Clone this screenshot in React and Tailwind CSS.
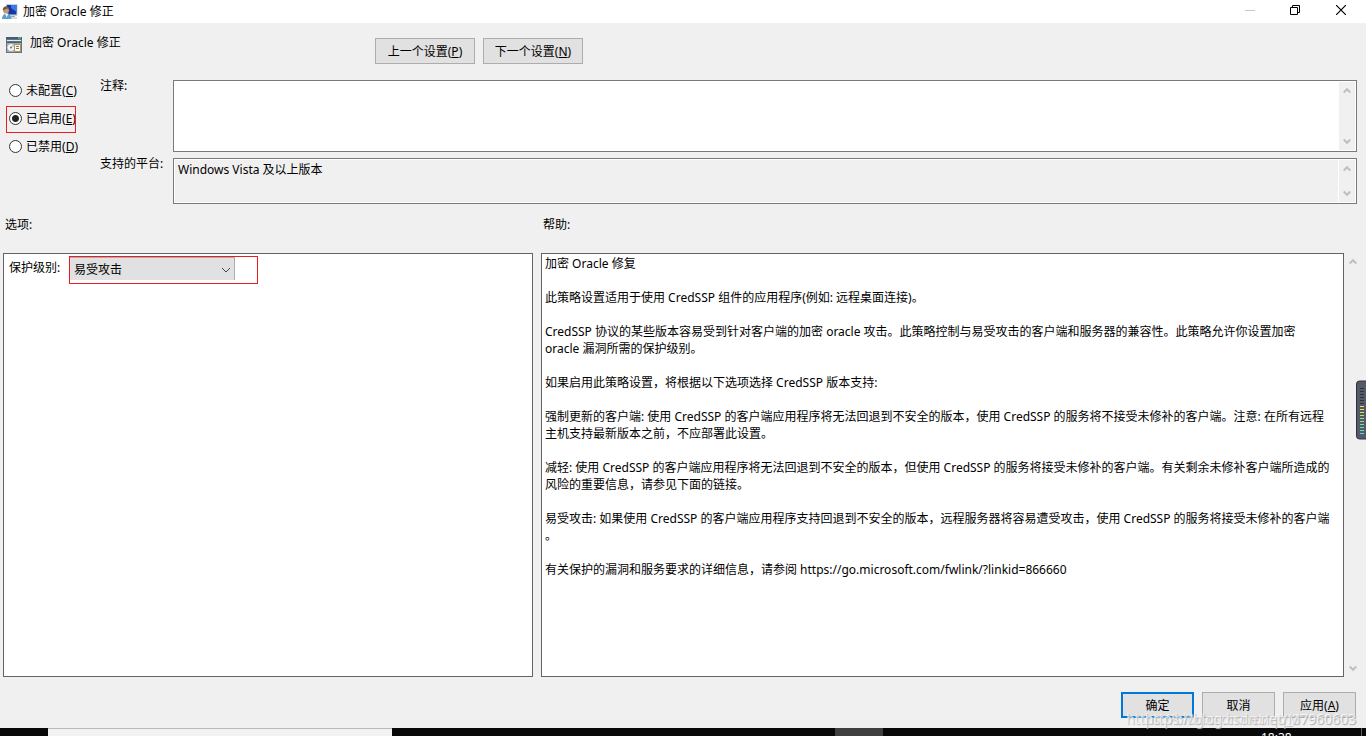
import React, { useState } from "react";

const help = [
  ["加密 Oracle 修复"],
  ["此策略设置适用于使用 CredSSP 组件的应用程序(例如: 远程桌面连接)。"],
  [
    "CredSSP 协议的某些版本容易受到针对客户端的加密 oracle 攻击。此策略控制与易受攻击的客户端和服务器的兼容性。此策略允许你设置加密",
    "oracle 漏洞所需的保护级别。",
  ],
  ["如果启用此策略设置，将根据以下选项选择 CredSSP 版本支持:"],
  [
    "强制更新的客户端: 使用 CredSSP 的客户端应用程序将无法回退到不安全的版本，使用 CredSSP 的服务将不接受未修补的客户端。注意: 在所有远程",
    "主机支持最新版本之前，不应部署此设置。",
  ],
  [
    "减轻: 使用 CredSSP 的客户端应用程序将无法回退到不安全的版本，但使用 CredSSP 的服务将接受未修补的客户端。有关剩余未修补客户端所造成的",
    "风险的重要信息，请参见下面的链接。",
  ],
  [
    "易受攻击: 如果使用 CredSSP 的客户端应用程序支持回退到不安全的版本，远程服务器将容易遭受攻击，使用 CredSSP 的服务将接受未修补的客户端",
    "。",
  ],
  ["有关保护的漏洞和服务要求的详细信息，请参阅 https://go.microsoft.com/fwlink/?linkid=866660"],
];

const states = [
  { id: "unset", label: "未配置", mark: "C" },
  { id: "enabled", label: "已启用", mark: "E" },
  { id: "disabled", label: "已禁用", mark: "D" },
];

function Arrow({ down }) {
  return (
    <svg width="8" height="7" viewBox="0 0 8 7" fill="none" stroke="#bfbfbf" strokeWidth="2">
      <path d={down ? "M.7 1.5 4 4.8 7.3 1.5" : "M.7 5.5 4 2.2 7.3 5.5"} />
    </svg>
  );
}

function ScrollTrack({ className }) {
  return (
    <div className={"flex shrink-0 flex-col items-center justify-between bg-[#f0f0f0] " + className}>
      <Arrow />
      <Arrow down />
    </div>
  );
}

function PushButton({ children, className }) {
  return (
    <button type="button" className={"flex h-[26px] items-center justify-center bg-[#e1e1e1] " + className}>
      <span>{children}</span>
    </button>
  );
}

function UserMonitorIcon() {
  return (
    <svg width="16" height="16" viewBox="0 0 16 16">
      <path d="M4 0h11.500v12H4z" fill="#c9d2da" />
      <path d="M5 1h9.500v9.500H5z" fill="#1438a0" />
      <path d="M9 1h5.500v7L9 4z" fill="#3b78ea" />
      <path d="M9 12h4v1H9z" fill="#9aa5ae" />
      <path d="M8 13h7v2H8z" fill="#d5dce2" />
      <circle cx="4" cy="6.500" r="3" fill="#c79a75" />
      <path d="M.8 6c0-5 6.500-5 6.500 0L5.500 4.500 2 6z" fill="#7a5a42" />
      <path d="M0 15c0-7.500 9-7.500 9.500 0z" fill="#5d9fcc" />
      <path d="m3 9.500 1.500 4 2-4z" fill="#edf5fa" />
    </svg>
  );
}

function PolicyIcon() {
  return (
    <svg width="16" height="16" viewBox="0 0 16 16">
      <path d="M0 0h16v16H0z" fill="#66737c" />
      <path d="M0 0h16v2H0z" fill="#3d5f78" />
      <path d="M12 0h3v2h-3z" fill="#57a36c" />
      <path d="M1 3h14v1H1z" fill="#e4e9ec" />
      <path d="M1 5h14v1H1z" fill="#4e5c66" />
      <path d="M1 6h14v9H1z" fill="#a3acb1" />
      <circle cx="5" cy="10.500" r="4" fill="#f4f4f4" stroke="#87939b" strokeWidth=".6" />
      <path d="m5 10.500 2-3 2 2z" fill="#b4d8bd" />
      <circle cx="5" cy="10.500" r="1" fill="#68757d" />
      <path d="M8.500 7.500h6v7h-6z" fill="#fff9df" stroke="#a19375" />
      <path d="M10 9.500h3M10 11.500h3" stroke="#8f7b52" />
    </svg>
  );
}

function TitleBar() {
  return (
    <header className="flex h-[23px] items-center bg-white pl-[2px]">
      <UserMonitorIcon />
      <h1 className="flex-1 pl-[5px]">加密 Oracle 修正</h1>
      <div className="flex h-full items-start">
        <button type="button" aria-label="最小化" disabled className="flex h-5 w-[45px] items-center justify-center">
          <svg width="10" height="10" viewBox="0 0 10 10">
            <path d="M0 5.500h10" stroke="#c8c8c8" />
          </svg>
        </button>
        <button type="button" aria-label="还原" className="flex h-5 w-[46px] items-center justify-center">
          <svg width="10" height="10" viewBox="0 0 10 10" fill="none" stroke="#000">
            <path d="M.5 2.500h7v7h-7zM2.500 2.500v-2h7v7h-2" />
          </svg>
        </button>
        <button type="button" aria-label="关闭" className="mr-[2px] flex h-5 w-[46px] items-center justify-center">
          <svg width="10" height="10" viewBox="0 0 10 10" stroke="#000" strokeWidth="1.200">
            <path d="m0 0 10 10M10 0 0 10" />
          </svg>
        </button>
      </div>
    </header>
  );
}

function LevelMeter() {
  const bars = Array.from({ length: 16 }, (_, i) => i);
  const lit = ["#e8e05a", "#d6e35c", "#c4e566", "#b0e56f", "#9ce57d", "#87e48e", "#74e4a0", "#63e3b1", "#55e1c2", "#4adfd0"];
  return (
    <svg className="absolute top-[380px] right-0" width="10" height="60" viewBox="0 0 10 60">
      <rect x=".5" y="1" width="14" height="58" rx="3" fill="#555a69" stroke="#30323b" />
      {bars.map((i) => (
        <rect key={i} x="4" y={8 + i * 3} width="4" height="1" fill={i < 6 ? "#30323b" : lit[i - 6]} />
      ))}
    </svg>
  );
}

export default function App() {
  const [state, setState] = useState("enabled");
  return (
    <div className="relative flex min-h-screen flex-col overflow-hidden bg-[#f0f0f0] font-['Noto_Sans','Noto_Sans_CJK_SC',sans-serif] text-[12px] leading-[17px] text-black">
      <TitleBar />
      <main className="flex flex-1 flex-col">
        <section className="flex h-[57px] items-start pl-[6px]">
          <div className="flex w-[369px] items-start gap-2 pt-[11px]">
            <div className="pt-[3px]"><PolicyIcon /></div>
            <h2>加密 Oracle 修正</h2>
          </div>
          <div className="flex gap-2 pt-[15px]">
            <PushButton className="w-[100px] border border-[#adadad]">上一个设置(<u>P</u>)</PushButton>
            <PushButton className="w-[100px] border border-[#adadad]">下一个设置(<u>N</u>)</PushButton>
          </div>
        </section>

        <section className="flex pr-[9px]">
          <fieldset className="relative -mt-1 w-[100px] shrink-0 pl-[9px]">
            {states.map((s) => (
              <label key={s.id} className="flex h-7 items-center gap-1 whitespace-nowrap">
                <input
                  type="radio"
                  name="state"
                  checked={state === s.id}
                  onChange={() => setState(s.id)}
                  className="h-[13px] w-[13px] shrink-0 appearance-none rounded-full border border-[#333] bg-white checked:bg-[radial-gradient(circle,#222_0_3px,#fff_4px)]"
                />
                <span>{s.label}(<u>{s.mark}</u>)</span>
              </label>
            ))}
            <div className="pointer-events-none absolute top-[30px] left-[6px] h-[27px] w-[70px] border border-[#ed1c24]" />
          </fieldset>
          <div className="flex flex-1 flex-col gap-[6px]">
            <div className="flex items-start">
              <label htmlFor="comment" className="-mt-[3px] w-[73px] shrink-0">注释:</label>
              <div className="flex h-[72px] flex-1 border border-[#7a7a7a] bg-white p-px">
                <textarea id="comment" className="flex-1 resize-none px-1 outline-none" />
                <ScrollTrack className="w-4 py-[5px]" />
              </div>
            </div>
            <div className="flex items-start">
              <label htmlFor="platform" className="-mt-[3px] w-[73px] shrink-0">支持的平台:</label>
              <div className="flex h-[46px] flex-1 gap-px border border-[#7a7a7a] bg-white p-px">
                <textarea id="platform" readOnly defaultValue="Windows Vista 及以上版本" className="flex-1 resize-none overflow-hidden bg-[#f0f0f0] px-[3px] pt-px outline-none" />
                <ScrollTrack className="w-4 py-[5px]" />
              </div>
            </div>
          </div>
        </section>

        <section className="grid flex-1 grid-cols-[530fr_820fr] gap-2 pt-3 pr-[5px] pl-[3px]">
          <div className="flex flex-col">
            <h3 className="h-[37px] pl-[2px]">选项:</h3>
            <div className="flex-1 border border-[#646464] bg-white pt-[2px] pl-[5px]">
              <div className="flex">
                <label htmlFor="level" className="w-[60px] pt-[3px]">保护级别:</label>
                <div className="h-7 w-[189px] border border-[#ed1c24]">
                  <div className="relative w-[165px]">
                    <select id="level" className="h-[23px] w-full appearance-none border-t border-r border-[#adadad] bg-[#e1e1e1] pl-1 outline-none">
                      <option>易受攻击</option>
                      <option>减轻</option>
                      <option>强制更新的客户端</option>
                    </select>
                    <svg className="pointer-events-none absolute top-[10px] right-1" width="10" height="6" viewBox="0 0 10 6" fill="none" stroke="#444">
                      <path d="m1 1 4 4 4-4" />
                    </svg>
                  </div>
                </div>
              </div>
            </div>
          </div>
          <div className="flex min-w-0 flex-col">
            <h3 className="h-[37px] pl-[2px]">帮助:</h3>
            <div className="flex flex-1">
              <article className="flex min-w-0 flex-1 flex-col gap-[17px] border border-[#646464] bg-white pt-[1px] pl-[3px] whitespace-nowrap">
                {help.map((lines) => (
                  <p key={lines[0]}>
                    {lines.map((line) => <span key={line} className="block">{line}</span>)}
                  </p>
                ))}
              </article>
              <ScrollTrack className="w-[17px] py-[5px]" />
            </div>
          </div>
        </section>

        <footer className="flex h-[51px] justify-end gap-2 pt-[15px] pr-[10px]">
          <PushButton className="w-[73px] border-2 border-[#0078d7]">确定</PushButton>
          <PushButton className="w-[73px] border border-[#adadad]">取消</PushButton>
          <PushButton className="w-[73px] border border-[#adadad]">应用(<u>A</u>)</PushButton>
        </footer>
      </main>

      <div className="flex h-2 overflow-hidden bg-[#080808]">
        <div className="ml-12 w-[344px] border-t border-[#b8b8b8] bg-[#f2f2f2]" />
        <div className="ml-[443px] w-12 bg-[#3f3f3f]" />
        <time className="ml-auto w-[101px] border-r border-[#606060] pt-px text-white">18:38</time>
        <div className="w-1" />
      </div>

      <LevelMeter />
      <div className="pointer-events-none absolute right-[10px] bottom-[9px] text-[14px] text-white/60 [text-shadow:1px_1px_1px_#b8b8b8]">https://blog.csdn.net/qq_37960603</div>
      <div className="pointer-events-none absolute right-[10px] bottom-[9px] text-[14px] text-white/60 [text-shadow:1px_1px_1px_#b8b8b8]">https://blog.csdn.net/M7960603</div>
    </div>
  );
}
